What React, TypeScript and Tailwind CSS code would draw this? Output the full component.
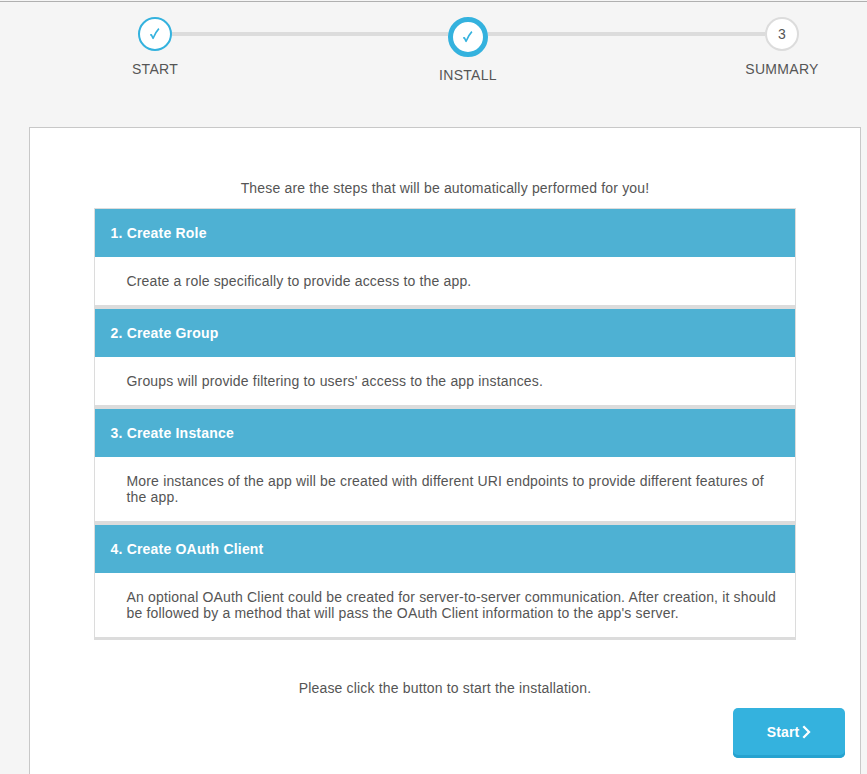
import React from "react";

const tasks = [
  { title: "1. Create Role", lines: ["Create a role specifically to provide access to the app."] },
  { title: "2. Create Group", lines: ["Groups will provide filtering to users' access to the app instances."] },
  {
    title: "3. Create Instance",
    lines: [
      "More instances of the app will be created with different URI endpoints to provide different features of",
      "the app.",
    ],
  },
  {
    title: "4. Create OAuth Client",
    lines: [
      "An optional OAuth Client could be created for server-to-server communication. After creation, it should",
      "be followed by a method that will pass the OAuth Client information to the app's server.",
    ],
  },
];

function Check() {
  return (
    <svg width="12" height="12" viewBox="0 0 12 12" fill="none">
      <path d="M1.2 6.9 L2.4 6.9 L4.1 10.3 Q6.3 4.4 9.9 0.6" stroke="#34b2de" strokeWidth="1.6" strokeLinejoin="round" />
    </svg>
  );
}

function Step({ label, className, children }: { label: string; className: string; children: React.ReactNode }) {
  return (
    <div className="flex w-[34px] shrink-0 flex-col items-center">
      <div className={"flex shrink-0 items-center justify-center rounded-full bg-white " + className}>{children}</div>
      <span className="mt-[10px] whitespace-nowrap leading-4 tracking-[0.3px]">{label}</span>
    </div>
  );
}

export default function App() {
  return (
    <div className="flex h-[774px] w-[867px] flex-col overflow-hidden bg-[#f5f5f5] pt-px font-['Liberation_Sans',Arial,sans-serif] text-[14px] leading-4 tracking-[0.17px] text-[#555]">
      <div className="h-px shrink-0 bg-[#b0b0b0]" />
      <div className="flex h-[125px] shrink-0 items-start pl-[138px] pr-[68px] pt-[15px]">
        <Step label="START" className="size-[34px] border-2 border-[#34b2de]">
          <Check />
        </Step>
        <div className="mt-[15px] h-1 w-[276px] bg-[#dcdcdc]" />
        <div className="flex w-10 shrink-0 justify-center">
          <Step label="INSTALL" className="size-10 border-[5px] border-[#34b2de]">
            <Check />
          </Step>
        </div>
        <div className="mt-[15px] h-1 w-[277px] bg-[#dcdcdc]" />
        <Step label="SUMMARY" className="size-[34px] border-2 border-[#dcdcdc]">
          3
        </Step>
      </div>
      <main className="ml-[29px] flex h-[700px] w-[832px] shrink-0 flex-col border border-[#c8c8c8] bg-white pt-[52px]">
        <p className="text-center">These are the steps that will be automatically performed for you!</p>
        <div className="mx-16 mt-3 w-[702px]">
          {tasks.map((task) => (
            <section key={task.title} className="border border-b-[3px] border-[#dcdcdc]">
              <h2 className="bg-[#4eb1d3] py-4 pl-[15.5px] text-[14px] font-bold leading-4 tracking-[0.2px] text-white">
                {task.title}
              </h2>
              <div className="whitespace-nowrap py-4 pl-[31.5px]">
                {task.lines.map((line) => (
                  <p key={line}>{line}</p>
                ))}
              </div>
            </section>
          ))}
        </div>
        <p className="mt-10 text-center">Please click the button to start the installation.</p>
        <button className="mr-[15px] mt-3 flex h-[50px] w-28 items-center justify-center gap-[3px] self-end rounded-[5px] bg-[#34b2de] pb-[3px] font-bold text-white shadow-[inset_0_-3px_0_#26a2cf]">
          Start
          <svg width="9" height="14" viewBox="0 0 9 14" fill="none">
            <path d="M1.3 1.2 L7 7 L1.3 12.8" stroke="white" strokeWidth="2.3" />
          </svg>
        </button>
      </main>
    </div>
  );
}
